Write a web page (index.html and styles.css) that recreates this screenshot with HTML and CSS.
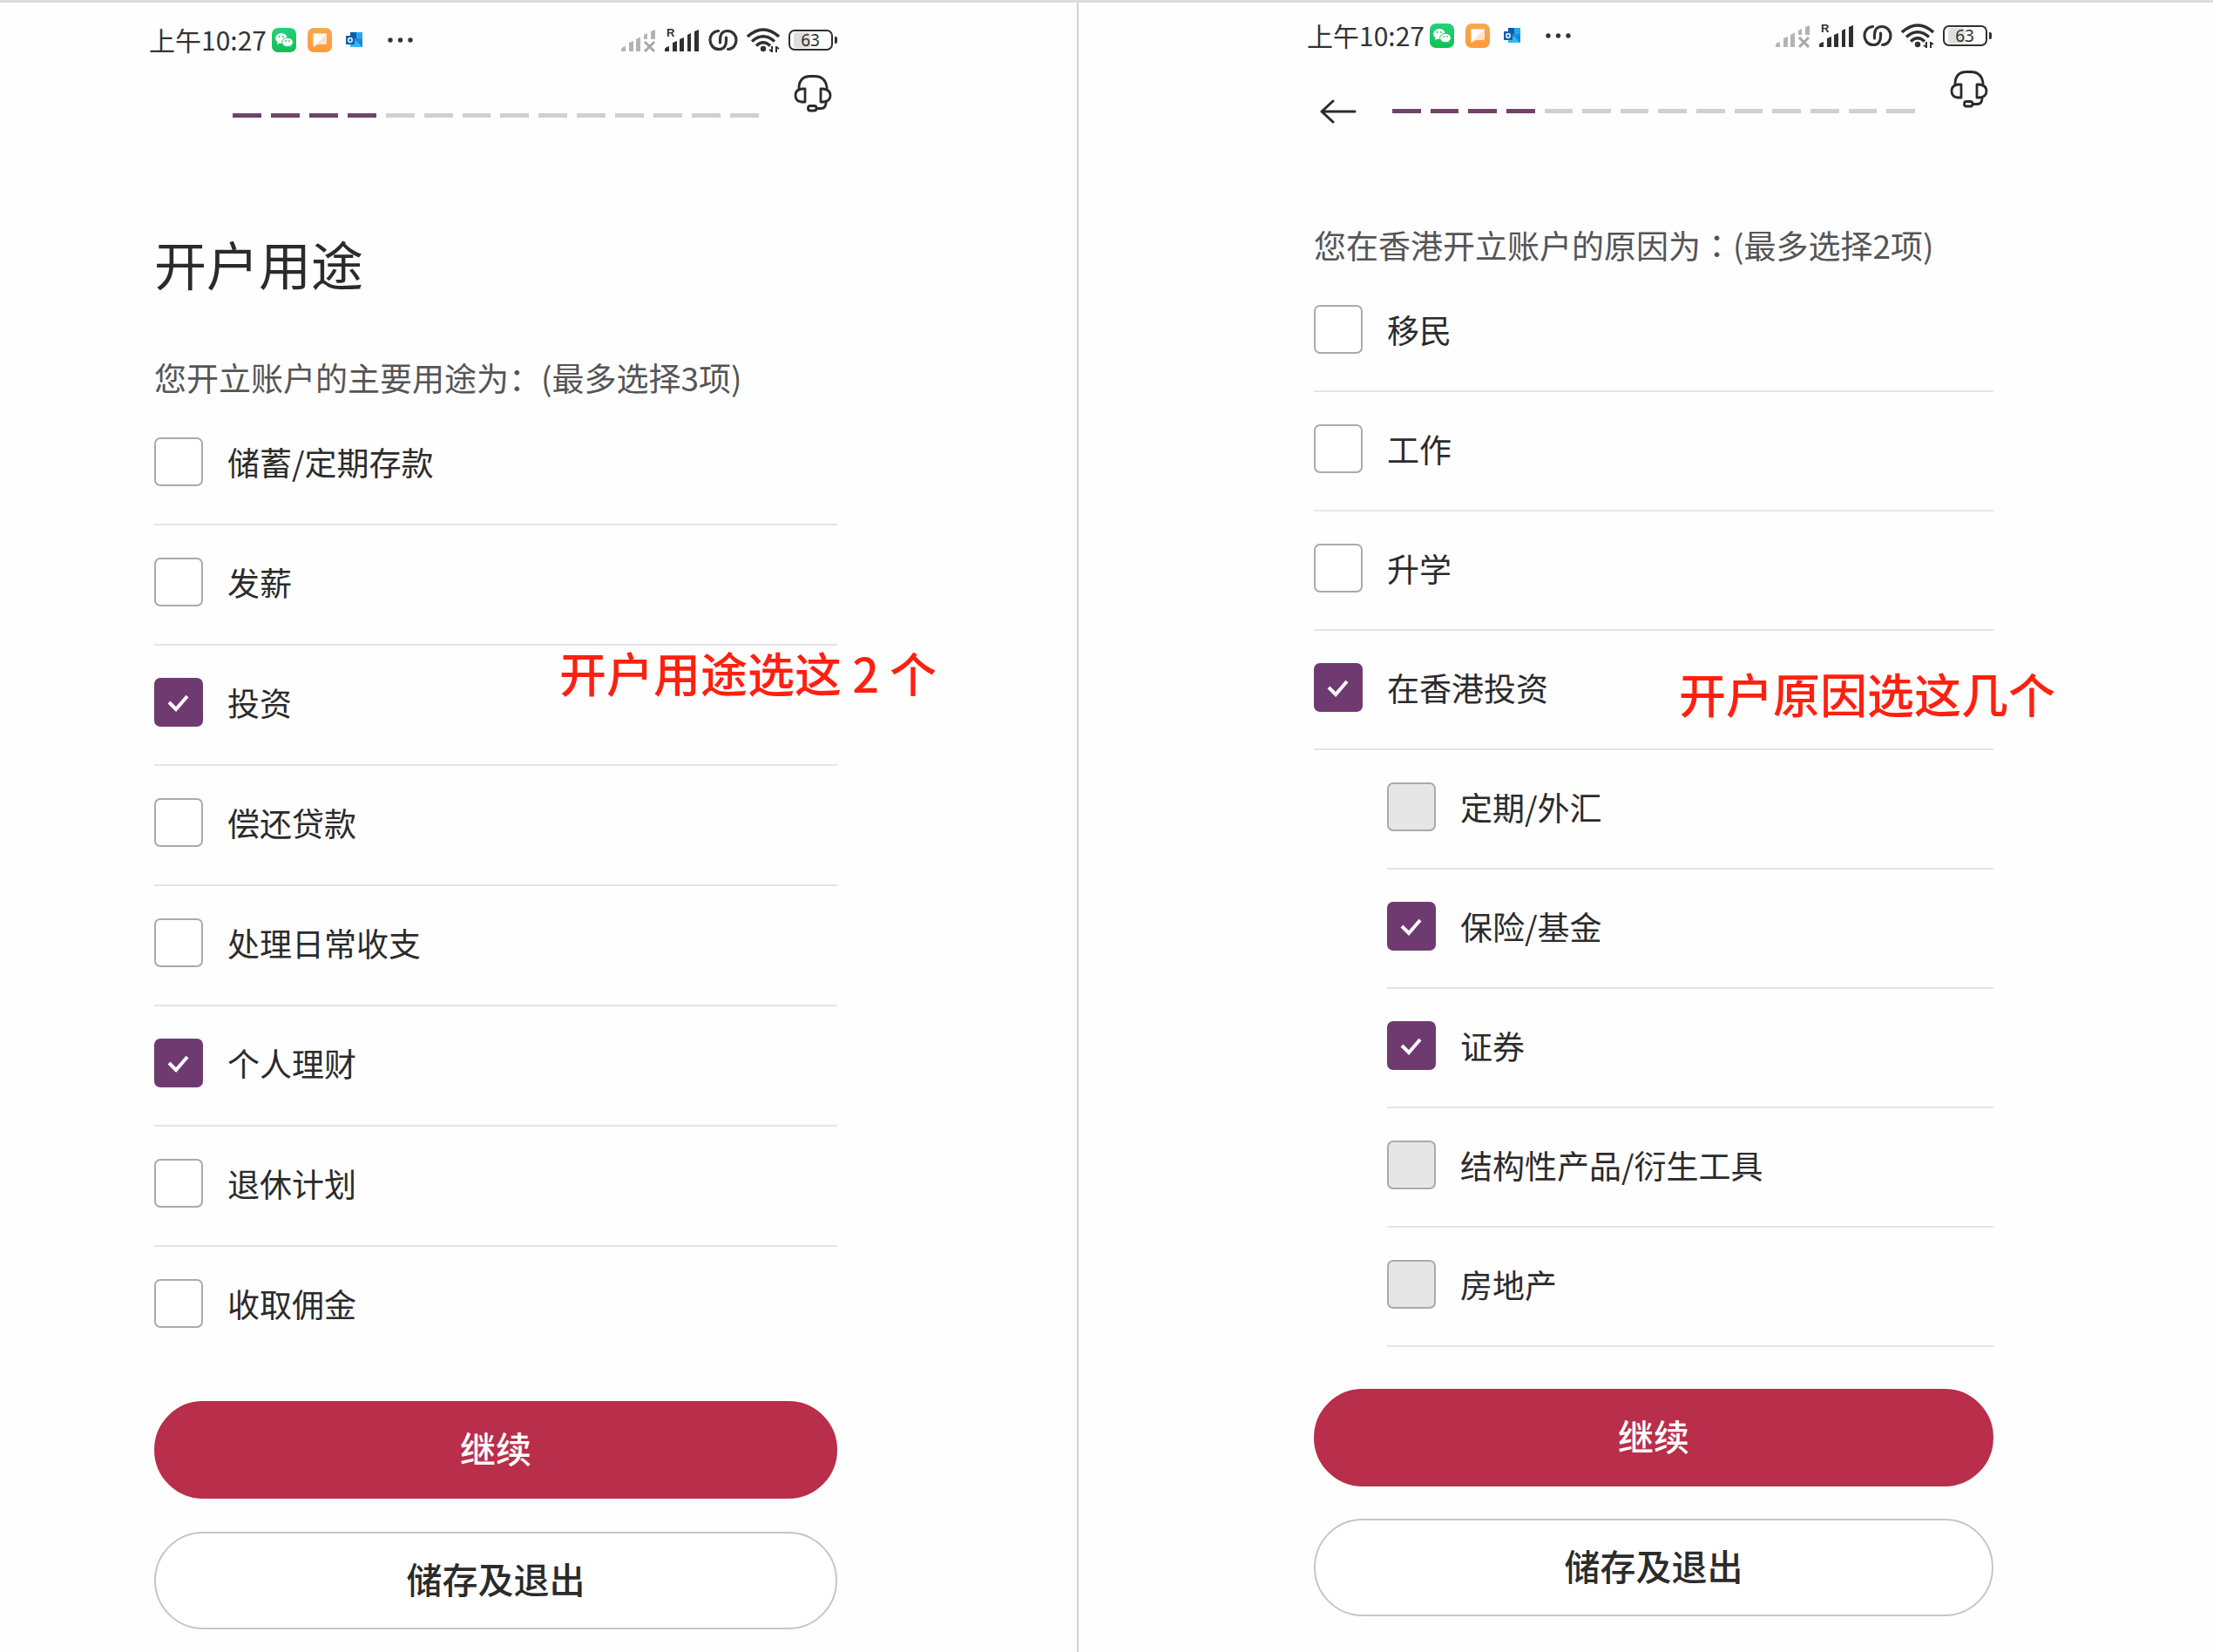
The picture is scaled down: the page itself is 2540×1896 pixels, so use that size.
FILE: index.html
```html
<!DOCTYPE html>
<html lang="zh-CN">
<head>
<meta charset="utf-8">
<meta name="viewport" content="width=device-width, initial-scale=1">
<title>开户用途</title>
<link rel="stylesheet" href="styles.css">
</head>
<body>
<svg class="sprite" aria-hidden="true">
  <defs>
    <linearGradient id="green" x1="0" y1="0" x2="0" y2="1"><stop offset="0" stop-color="#25d27b"/><stop offset="1" stop-color="#0fc052"/></linearGradient>
    <linearGradient id="orange" x1="0" y1="0" x2="0" y2="1"><stop offset="0" stop-color="#f9a851"/><stop offset="1" stop-color="#ff9a3c"/></linearGradient>
    <linearGradient id="paper" x1="0" y1="0" x2="1" y2="1"><stop offset=".5" stop-color="#fff"/><stop offset=".5" stop-color="#ffe3c8"/></linearGradient>
  </defs>
  <symbol id="wechat" viewBox="0 0 28 28">
    <rect width="28" height="28" rx="7" fill="url(#green)"/>
    <path d="M6 19.500l1-4h4z" fill="#fff"/>
    <ellipse cx="11" cy="12" rx="6.800" ry="6" fill="#fff"/>
    <path d="M22.500 22l-1-4h-4z" fill="#fff"/>
    <ellipse cx="18" cy="16.500" rx="6.300" ry="5.200" fill="#fff" stroke="#1bc967" stroke-width="1"/>
    <g fill="#1bc967"><circle cx="8.500" cy="10" r="1"/><circle cx="13" cy="10" r="1"/><circle cx="16" cy="15" r=".9"/><circle cx="20" cy="15" r=".9"/></g>
  </symbol>
  <symbol id="note" viewBox="0 0 28 28">
    <rect width="28" height="28" rx="7" fill="url(#orange)"/>
    <path d="M7 6.500h14q1 0 1 1V18q0 1-1 1h-9.500L6.500 22.500V7q0-.5.5-.5z" fill="url(#paper)"/>
  </symbol>
  <symbol id="outlook" viewBox="0 0 20 20">
    <path d="M5 1h14v17H5z" fill="#1490df"/>
    <path d="M5 1h7v7H5z" fill="#0a5ea8"/><path d="M12 1h7v7h-7z" fill="#28a8ea"/>
    <path d="M5 13l7-2 7 7H5z" fill="#35b8f1"/><path d="M14 12l5-2v8z" fill="#1785d8"/>
    <path d="M0 5h10v10H0z" fill="#0f62b0"/>
    <circle cx="5" cy="10" r="2.200" fill="none" stroke="#fff" stroke-width="1.400"/>
  </symbol>
  <symbol id="more" viewBox="0 0 30 8">
    <g fill="#333"><circle cx="4" cy="4" r="2.700"/><circle cx="15.500" cy="4" r="2.700"/><circle cx="27" cy="4" r="2.700"/></g>
  </symbol>
  <symbol id="nosignal" viewBox="0 0 40 28">
    <g fill="#b3b3b3"><path d="M0 27v-3q1-2 5-3v6zM9 27V17l5-2v12zM17 27V13l5-2.500V27zM26 13V8l4-2v7zM34 13V4l5-2v11z"/></g>
    <path d="M27 16l11 11M38 16L27 27" stroke="#a8a8a8" stroke-width="3"/>
  </symbol>
  <symbol id="signal" viewBox="0 0 40 28">
    <path d="M0 27v-3q1-2 5-3v6zM9 27V17l5-2v12zM17 27V13l5-2v16zM26 27V8l4-2v21zM34 27V4l5-2v25z" fill="#303030"/>
  </symbol>
  <symbol id="link" viewBox="0 0 34 28">
    <g fill="none" stroke="#333" stroke-width="3.200" stroke-linecap="round">
      <path d="M11.500 3.500C5 4 2 9 2 14s3.500 10.500 10 10.500 8.500-5 8.500-9.500v-4"/>
      <path d="M22.500 24.500C29 24 32 19 32 14S28.500 3.500 22 3.500 13.500 8.500 13.500 13v4"/>
    </g>
  </symbol>
  <symbol id="wifi" viewBox="0 0 38 28">
    <g fill="none" stroke="#303030" stroke-width="3.400"><path d="M1 10Q19-6 37 10"/><path d="M6 15.500Q19 4 32 15.500"/><path d="M11 20.500Q19 13 27 20.500"/></g>
    <circle cx="19" cy="24" r="3.200" fill="#303030"/>
    <path d="M29 21v7M29 27l-3-2M34 28v-7M34 22l3 2" fill="none" stroke="#303030" stroke-width="2"/>
  </symbol>
  <symbol id="battery" viewBox="0 0 56 28">
    <rect x="6" y="5" width="19" height="18" rx="3" fill="#dedede"/>
    <rect x="1" y="3" width="49" height="22" rx="6" fill="none" stroke="#303030" stroke-width="2"/>
    <path d="M53 10h1q2 0 2 2v4q0 2-2 2h-1z" fill="#303030"/>
  </symbol>
  <symbol id="headset" viewBox="0 0 44 44">
    <g fill="none" stroke="#2b2b2b" stroke-width="2.800" stroke-linejoin="round">
      <path d="M6 17V15Q7 2.500 19 2.500h5Q36 2.500 38 15v2"/>
      <path d="M13 17v15H9Q2 31 2 24.500T9 17z"/><path d="M31 17v15h3Q42 31 42 24.500T34 17z"/>
      <path d="M37 31v2Q37 39.500 31 39.500h-5"/><rect x="16.500" y="36.500" width="9.500" height="5.500" rx="2.500"/>
    </g>
  </symbol>
  <symbol id="back" viewBox="0 0 42 28">
    <path d="M15 2L2 14l13 12M2 14h38" fill="none" stroke="#2b2b2b" stroke-width="3" stroke-linecap="round" stroke-linejoin="round"/>
  </symbol>
</svg>

<main class="board">
  <section class="phone phone-purpose">
    <div class="status">
      <span class="clock">上午10:27</span>
      <svg class="app"><use href="#wechat"/></svg>
      <svg class="app"><use href="#note"/></svg>
      <svg class="mail"><use href="#outlook"/></svg>
      <svg class="more"><use href="#more"/></svg>
      <div class="system">
        <svg class="bars"><use href="#nosignal"/></svg>
        <svg class="bars"><use href="#signal"/><text class="roam" x="2" y="10">R</text></svg>
        <svg class="link"><use href="#link"/></svg>
        <svg class="wifi"><use href="#wifi"/></svg>
        <svg class="battery"><use href="#battery"/><text class="charge" x="25" y="21" text-anchor="middle">63</text></svg>
      </div>
    </div>
    <header class="bar">
      <div class="steps"><i class="done"></i><i class="done"></i><i class="done"></i><i class="done"></i><i></i><i></i><i></i><i></i><i></i><i></i><i></i><i></i><i></i><i></i></div>
      <button class="icon help" type="button" aria-label="客服"><svg><use href="#headset"/></svg></button>
    </header>
    <h1>开户用途</h1>
    <p class="question" id="q1">您开立账户的主要用途为：(最多选择3项)</p>
    <div class="options" role="group" aria-labelledby="q1">
      <label class="option"><input type="checkbox">储蓄/定期存款</label>
      <label class="option"><input type="checkbox">发薪</label>
      <label class="option"><input type="checkbox" checked>投资</label>
      <label class="option"><input type="checkbox">偿还贷款</label>
      <label class="option"><input type="checkbox">处理日常收支</label>
      <label class="option"><input type="checkbox" checked>个人理财</label>
      <label class="option"><input type="checkbox">退休计划</label>
      <label class="option"><input type="checkbox">收取佣金</label>
    </div>
    <div class="actions">
      <button class="primary" type="button">继续</button>
      <button class="secondary" type="button">储存及退出</button>
    </div>
    <strong class="note">开户用途选这 2 个</strong>
  </section>

  <section class="phone phone-reason">
    <div class="status">
      <span class="clock">上午10:27</span>
      <svg class="app"><use href="#wechat"/></svg>
      <svg class="app"><use href="#note"/></svg>
      <svg class="mail"><use href="#outlook"/></svg>
      <svg class="more"><use href="#more"/></svg>
      <div class="system">
        <svg class="bars"><use href="#nosignal"/></svg>
        <svg class="bars"><use href="#signal"/><text class="roam" x="2" y="10">R</text></svg>
        <svg class="link"><use href="#link"/></svg>
        <svg class="wifi"><use href="#wifi"/></svg>
        <svg class="battery"><use href="#battery"/><text class="charge" x="25" y="21" text-anchor="middle">63</text></svg>
      </div>
    </div>
    <header class="bar">
      <button class="icon back" type="button" aria-label="返回"><svg><use href="#back"/></svg></button>
      <div class="steps"><i class="done"></i><i class="done"></i><i class="done"></i><i class="done"></i><i></i><i></i><i></i><i></i><i></i><i></i><i></i><i></i><i></i><i></i></div>
      <button class="icon help" type="button" aria-label="客服"><svg><use href="#headset"/></svg></button>
    </header>
    <p class="question" id="q2">您在香港开立账户的原因为<span class="colon" lang="zh-TW">：</span>(最多选择2项)</p>
    <div class="options" role="group" aria-labelledby="q2">
      <label class="option"><input type="checkbox">移民</label>
      <label class="option"><input type="checkbox">工作</label>
      <label class="option"><input type="checkbox">升学</label>
      <label class="option"><input type="checkbox" checked>在香港投资</label>
      <div class="nested">
        <label class="option"><input type="checkbox" disabled>定期/外汇</label>
        <label class="option"><input type="checkbox" checked>保险/基金</label>
        <label class="option"><input type="checkbox" checked>证券</label>
        <label class="option"><input type="checkbox" disabled>结构性产品/衍生工具</label>
        <label class="option"><input type="checkbox" disabled>房地产</label>
      </div>
    </div>
    <div class="actions">
      <button class="primary" type="button">继续</button>
      <button class="secondary" type="button">储存及退出</button>
    </div>
    <strong class="note">开户原因选这几个</strong>
  </section>
</main>
</body>
</html>
```
FILE: styles.css
```css
* { box-sizing: border-box; }

body {
  margin: 0;
  background: #fefefe;
  color: #2b2b2b;
  font-family: "Noto Sans CJK SC", "Noto Sans", sans-serif;
  font-size: 37px;
}

button { font-family: inherit; cursor: pointer; }
svg { display: block; flex: none; overflow: visible; }
.sprite { position: absolute; width: 0; height: 0; }

.board {
  display: grid;
  grid-template-columns: 1236fr 1304fr;
  min-height: 100vh;
  border-top: 3px solid #dcdcdc;
}

.phone { position: relative; min-width: 0; }
.phone-purpose { padding: 21px 275px 24px 177px; }
.phone-reason { padding: 16px 252px 24px 270px; border-left: 2px solid #d0d0d0; }

/* Status bar */
.status {
  display: flex;
  align-items: center;
  height: 44px;
  margin-left: -6px;
}
.phone-reason .status { margin-left: -8px; padding-right: 2px; }
.clock { font-size: 30px; line-height: 40px; margin-right: 6px; padding-bottom: 2px; color: #333; }
.app { width: 28px; height: 28px; margin-right: 13px; }
.mail { width: 20px; height: 20px; margin: 0 27px 0 3px; }
.more { width: 30px; height: 8px; }
.system { display: flex; gap: 10px; margin-left: auto; }
.bars { width: 40px; height: 28px; }
.link { width: 34px; height: 28px; }
.wifi { width: 38px; height: 28px; }
.battery { width: 56px; height: 28px; }
.roam { font: bold 13px "Liberation Sans", sans-serif; fill: #303030; }
.charge { font: 19px "Noto Sans", sans-serif; fill: #303030; }

/* Progress header */
.bar {
  display: grid;
  grid-template-columns: 90px 1fr 90px;
  height: 62px;
  margin-top: 17px;
}
.icon { border: 0; padding: 0; background: none; }
.back { grid-column: 1; align-self: end; justify-self: start; margin-left: 7px; }
.back svg { width: 42px; height: 28px; }
.help { grid-column: 3; align-self: start; justify-self: end; margin-right: 6px; }
.help svg { width: 44px; height: 44px; }
.steps {
  grid-column: 2;
  grid-row: 1;
  align-self: end;
  display: flex;
  gap: 11px;
  padding-bottom: 12px;
}
.steps i { flex: 1; height: 5px; background: #d0d0d0; }
.steps .done { background: #704468; }

h1 { margin: 119px 0 0; font-size: 60px; font-weight: 400; line-height: 72px; }
.question { margin: 71px 0 0; line-height: 48px; color: #555; white-space: nowrap; }
.phone-reason .question { margin-top: 115px; }
.colon { font-family: "Noto Sans CJK TC", sans-serif; }

/* Options */
.options { margin-top: 8px; }
.option {
  display: flex;
  align-items: center;
  gap: 28px;
  padding: 37px 0 43px;
  border-bottom: 2px solid #e5e5e5;
  line-height: 56px;
}
.phone-reason .option { padding-bottom: 42px; }
.phone-purpose .option:last-child { border-bottom-color: transparent; }
.nested { padding-left: 84px; }

input[type="checkbox"] {
  appearance: none;
  flex: none;
  width: 56px;
  height: 56px;
  margin: 0;
  border: 2px solid #aaa;
  border-radius: 7px;
  background: #fff;
}
input[type="checkbox"]:disabled { background: #e6e6e6; }
input[type="checkbox"]:checked {
  border-color: #6f3a70;
  background: #6f3a70 url("data:image/svg+xml,%3Csvg xmlns='http://www.w3.org/2000/svg' viewBox='0 0 52 52'%3E%3Cpath d='M15 26l8 8 13-15' fill='none' stroke='white' stroke-width='4'/%3E%3C/svg%3E") center / 52px 52px no-repeat;
}

/* Actions */
.actions { display: grid; gap: 38px; margin-top: 39px; }
.phone-reason .actions { gap: 37px; margin-top: 48px; }
.actions button {
  height: 112px;
  padding: 0 0 6px;
  border: 2px solid #c6c6c6;
  border-radius: 56px;
  background: #fff;
  color: #2b2b2b;
  font-size: 41px;
  font-weight: 500;
}
.actions .primary { border-color: #b92e4a; background: #b92e4a; color: #fff; }

/* Red remarks laid over the screens */
.note {
  position: absolute;
  top: 733px;
  left: 642px;
  color: #ff2010;
  font-size: 54px;
  font-weight: 500;
  line-height: 72px;
  white-space: nowrap;
}
.phone-reason .note { top: 757px; left: 689px; }
```
